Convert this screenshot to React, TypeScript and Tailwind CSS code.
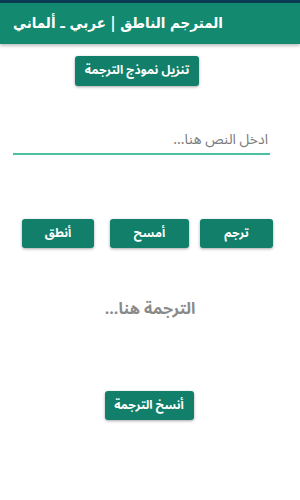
import { useState } from 'react';

const font = { fontFamily: '"Noto Sans Arabic", "DejaVu Sans", sans-serif' };
const titleFont = { fontFamily: '"DejaVu Sans Condensed", "DejaVu Sans", sans-serif' };

function GreenButton({ label, className = '' }: { label: string; className?: string }) {
  return (
    <button
      type="button"
      className={`flex h-[29px] items-center justify-center rounded-[3px] bg-[#127f6b] text-[12px] font-bold text-white shadow-[0_1px_3px_rgba(0,0,0,0.35)] ${className}`}
    >
      {label}
    </button>
  );
}

export default function App() {
  const [text, setText] = useState('');

  return (
    <div dir="rtl" style={font} className="flex h-[500px] w-[300px] flex-col bg-white">
      <div className="h-[3px] bg-[#0b3b52]" />
      <header className="flex h-[41px] items-center justify-end bg-[#138a70] px-[13px] shadow-[0_2px_3px_rgba(0,0,0,0.25)]">
        <h1 style={titleFont} className="text-[15px] font-bold text-white">
          المترجم الناطق | عربي ـ ألماني
        </h1>
      </header>

      <div className="mt-[12px] flex justify-center">
        <GreenButton label="تنزيل نموذج الترجمة" className="h-[30px] w-[124px] -translate-x-[13px]" />
      </div>

      <div className="mr-[30px] ml-[13px] mt-[40px] flex">
        <input
          value={text}
          onChange={(e) => setText(e.target.value)}
          placeholder="ادخل النص هنا..."
          className="h-[29px] w-full border-b-2 border-[#4cc0a4] bg-transparent pr-[2px] text-[14px] text-[#333] caret-[#138a70] outline-none placeholder:text-[#7a7a7a]"
          autoFocus
        />
      </div>

      <div className="mt-[64px] flex justify-center gap-[11px] pr-[5px]">
        <GreenButton label="ترجم" className="w-[73px]" />
        <GreenButton label="أمسح" className="ml-[5px] w-[79px]" />
        <GreenButton label="أنطق" className="w-[72px]" />
      </div>

      <p className="mt-[49px] text-center text-[16px] font-bold text-[#8a8a8a]">الترجمة هنا...</p>

      <div className="mt-[70px] flex justify-center">
        <GreenButton label="أنسخ الترجمة" className="w-[89px] -translate-x-[1px]" />
      </div>
    </div>
  );
}
